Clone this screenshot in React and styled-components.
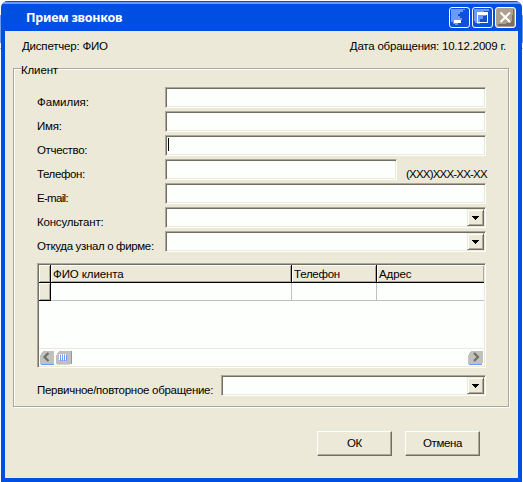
import React from 'react';
import styled, { createGlobalStyle } from 'styled-components';

const Global = createGlobalStyle`
  * { box-sizing: border-box; }
  html, body { margin: 0; background: #fff; overflow: hidden; }
  body { font-family: "Liberation Sans", Arial, sans-serif; font-size: 11.5px; line-height: 14px; color: #000; }
`;

const Desktop = styled.div`
  width: 523px;
  height: 482px;
  padding: 1px 1px 0;
  background: linear-gradient(#fdfdfd 15px, #6f9bf0 15px, #6f9bf0 43px, #fdfdfd 43px, #fdfdfd 48px, #b5b2a5 48px, #b5b2a5 49px, #fdfdfd 49px);
`;
const Window = styled.div`
  width: 521px;
  height: 481px;
  display: flex;
  flex-direction: column;
  border: 4px solid #004fe3;
  border-top: 0;
  border-radius: 7px 7px 0 0;
  background: #ece9d8;
`;
const TitleBar = styled.header`
  height: 30px;
  flex: none;
  margin: 0 -4px;
  padding: 3px 6px 0 25px;
  display: flex;
  align-items: center;
  gap: 2px;
  background: linear-gradient(#004fe3 1px, #6a9bfc 1px, #6a9bfc 3px, #004fe3 3px);
  border-radius: 7px 7px 0 0;
`;
const Title = styled.h1`
  flex: 1;
  margin: 0;
  font: bold 12.5px/16px "Noto Sans", sans-serif;
  letter-spacing: -0.25px;
  color: #fff;
`;
const Text = styled.span`
  white-space: nowrap;
  letter-spacing: ${p => p.$ls || 0}px;
`;
const Info = styled.div`
  display: flex;
  justify-content: space-between;
  height: 37px;
  flex: none;
  padding: 8px 12px 0 17px;
`;
const Group = styled.fieldset`
  position: relative;
  width: 496px;
  min-width: 0;
  height: 339px;
  flex: none;
  margin: 0 0 0 8px;
  padding: 18px 23px 0;
  border: 1px solid #aca899;
  box-shadow: inset 1px 1px #fff, 1px 1px #fff;
`;
const Caption = styled.span`
  position: absolute;
  left: 7px;
  top: -6px;
  background: #ece9d8;
  letter-spacing: -0.15px;
`;
const Row = styled.div`
  display: flex;
  height: 24px;
  margin-top: ${p => p.$gap || 0}px;
`;
const Label = styled.label`
  width: ${p => p.$w || 128}px;
  flex: none;
  padding-top: 8px;
  white-space: nowrap;
  letter-spacing: ${p => p.$ls || 0}px;
`;
const Field = styled.div`
  width: ${p => p.$w || 321}px;
  height: 21px;
  flex: none;
  display: flex;
  justify-content: flex-end;
  background: #fdfffc;
  border: 1px solid;
  border-color: #aca899 #fff #fff #aca899;
  box-shadow: inset 1px 1px #716f64, inset -1px -1px #ece9d8;
  padding: 1px;
`;
const Caret = styled.i`
  width: 1px;
  height: 13px;
  margin: 1px auto 0 1px;
  background: #000;
`;
const Drop = styled.span`
  width: 17px;
  height: 17px;
  display: flex;
  align-items: center;
  justify-content: center;
  background: #ece9d8;
  border: 1px solid;
  border-color: #ece9d8 #716f64 #716f64 #ece9d8;
  box-shadow: inset 1px 1px #fff, inset -1px -1px #aca899;
`;
const Mask = styled.span`
  padding: 8px 0 0 9px;
  white-space: nowrap;
  letter-spacing: -0.8px;
`;
const Table = styled.div`
  width: 449px;
  height: 105px;
  margin-top: 8px;
  border: 1px solid;
  border-color: #aca899 #fff #fff #aca899;
  box-shadow: inset 1px 1px #716f64, inset -1px -1px #ece9d8;
  padding: 1px;
  background: #fdfffc;
  display: flex;
  flex-direction: column;
`;
const Line = styled.div`
  height: 18px;
  display: grid;
  grid-template-columns: 12px 241px 85px 1fr;
`;
const Head = styled.div`
  padding: 2px 0 0 2px;
  background: #ece9d8;
  border-right: ${p => (p.$last ? 0 : 1)}px solid #000;
  border-bottom: 1px solid #000;
  box-shadow: inset 1px 1px #fff, inset -1px -1px #aca899;
  letter-spacing: ${p => p.$ls || 0}px;
`;
const Cell = styled.div`
  border-right: ${p => (p.$last ? 0 : 1)}px solid #c0c0c0;
  border-bottom: 1px solid #c0c0c0;
`;
const Scroll = styled.div`
  height: 18px;
  margin-top: auto;
  border-top: 1px solid #ece9d8;
  display: flex;
  padding: 1px 0 0 1px;
`;
const Footer = styled.footer`
  display: flex;
  gap: 13px;
  padding: 24px 0 0 312px;
`;
const Button = styled.button`
  width: 75px;
  height: 25px;
  padding: 0 0 2px;
  font: inherit;
  color: #000;
  background: #ece9d8;
  border: 1px solid;
  border-color: #fff #716f64 #716f64 #fff;
  box-shadow: inset -1px -1px #aca899;
  letter-spacing: -0.4px;
`;

const Control = ({ kind }) => (
  <svg width="21" height="21">
    <rect x=".5" y=".5" width="20" height="20" rx="2.5" fill={kind === 'close' ? '#aca18f' : '#0d50dc'} stroke="#fff" />
    <g shapeRendering="crispEdges">
      {kind === 'min' && (
        <>
          <path d="M2 2H16V3H14V5H11V7H9V9H11V11H13V13H10V16H9V18H6V17H4V15H2Z" fill="#6a9bfc" />
          <path d="M5 13h7v3H5z" fill="#fff" />
        </>
      )}
      {kind === 'max' && (
        <>
          <path d="M2 2H17V4H12V7H14V9H11V12H8V17H5V16H3V14H2Z" fill="#6a9bfc" />
          <path d="M5 5h11v11H5zM6 8v7h9V8z" fill="#fff" fillRule="evenodd" />
        </>
      )}
      {kind === 'close' && <path d="M18 2h1v17H3v-2h8v-1h5v-2h1V8h1z" fill="#7b705f" />}
    </g>
    {kind === 'close' && <path d="M5.5 5.5l9.5 9.5M15 5.5l-9.5 9.5" stroke="#fff" strokeWidth="2.1" />}
  </svg>
);
const Arrow = () => (
  <svg width="7" height="4" shapeRendering="crispEdges">
    <path d="M0 0h7v1H6v1H5v1H4v1H3V3H2V2H1V1H0z" />
  </svg>
);
const ScrollPart = ({ kind }) => (
  <svg width="16" height="16">
    <g shapeRendering="crispEdges">
      <rect x="0" y="1" width={kind === 'thumb' ? 15 : 14} height="13" fill="#c0c0bd" />
      <path d="M0 1h3v1H2v1H1v2H0z" fill="#fff" />
      <rect x="1" y="14" width="13" height="1" fill={kind === 'thumb' ? '#d5d5d0' : '#6a9bfc'} />
      {kind === 'thumb' && <rect x="15" y="1" width="1" height="13" fill="#6a9bfc" />}
      {kind === 'right' && <rect x="14" y="1" width="1" height="12" fill="#c0c0bd" />}
      {kind === 'thumb' && (
        <>
          <path d="M3 4h1v6H3zM5 4h1v6H5zM7 4h1v6H7zM9 4h1v6H9z" fill="#fff" />
          <path d="M4 5h1v6H4zM6 5h1v6H6zM8 5h1v6H8zM10 5h1v6h-1z" fill="#6a9bfc" />
        </>
      )}
    </g>
    {kind === 'left' && <path d="M8.5 3L4.5 7L8.5 11" fill="none" stroke="#716f64" strokeWidth="2.2" />}
    {kind === 'right' && <path d="M6 3L10 7L6 11" fill="none" stroke="#716f64" strokeWidth="2.2" />}
  </svg>
);
const Combo = ({ w }) => <Field $w={w}><Drop><Arrow /></Drop></Field>;
const Spacer = styled.span`flex: 1;`;

export default function App() {
  return (
    <Desktop>
      <Global />
      <Window>
        <TitleBar>
          <Title>Прием звонков</Title>
          <Control kind="min" /><Control kind="max" /><Control kind="close" />
        </TitleBar>
        <Info>
          <Text $ls={-0.2}>Диспетчер: ФИО</Text>
          <Text $ls={-0.21}>Дата обращения: 10.12.2009 г.</Text>
        </Info>
        <Group>
          <Caption>Клиент</Caption>
          <Row><Label>Фамилия:</Label><Field /></Row>
          <Row><Label $ls={-0.2}>Имя:</Label><Field /></Row>
          <Row><Label $ls={-0.35}>Отчество:</Label><Field><Caret /></Field></Row>
          <Row><Label $ls={-0.4}>Телефон:</Label><Field $w={232} /><Mask>(XXX)XXX-XX-XX</Mask></Row>
          <Row><Label $ls={-0.7}>E-mail:</Label><Field /></Row>
          <Row><Label $ls={-0.2}>Консультант:</Label><Combo /></Row>
          <Row><Label $ls={-0.35}>Откуда узнал о фирме:</Label><Combo /></Row>
          <Table>
            <Line>
              <Head /><Head $ls={-0.1}>ФИО клиента</Head><Head $ls={-0.25}>Телефон</Head><Head $last $ls={-0.1}>Адрес</Head>
            </Line>
            <Line><Head /><Cell /><Cell /><Cell $last /></Line>
            <Scroll><ScrollPart kind="left" /><ScrollPart kind="thumb" /><Spacer /><ScrollPart kind="right" /></Scroll>
          </Table>
          <Row $gap={7}><Label $w={184} $ls={-0.28}>Первичное/повторное обращение:</Label><Combo w={265} /></Row>
        </Group>
        <Footer><Button>ОК</Button><Button>Отмена</Button></Footer>
      </Window>
    </Desktop>
  );
}
